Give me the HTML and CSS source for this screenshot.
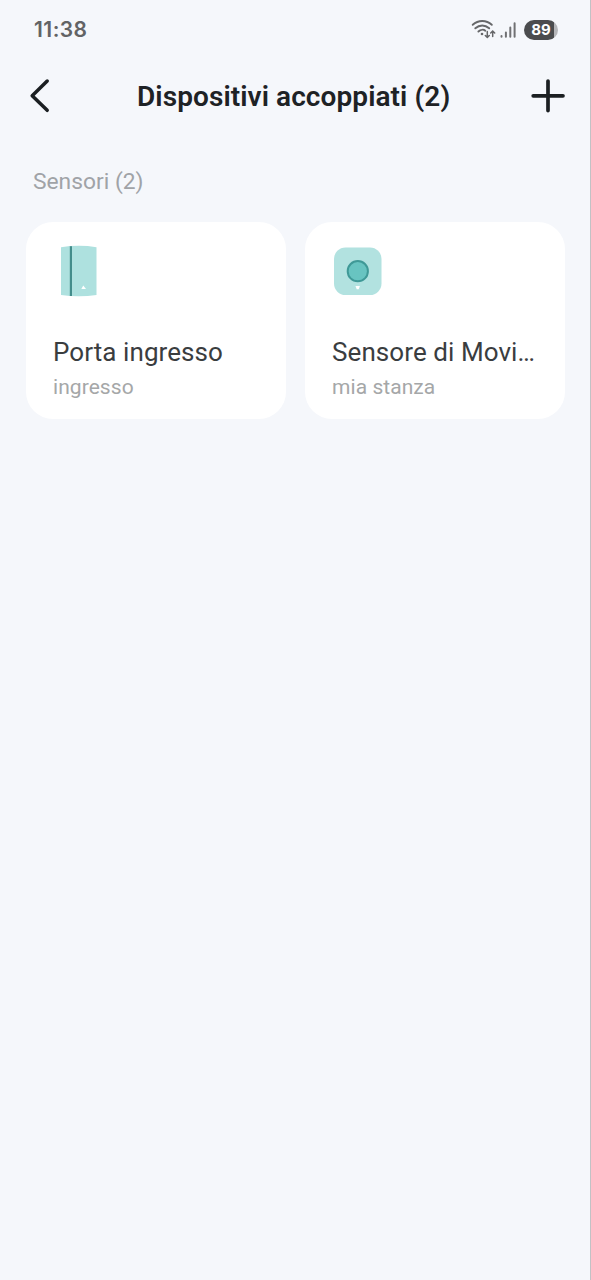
FILE: index.html
```html
<!DOCTYPE html>
<html lang="it">
<head>
<meta charset="utf-8">
<title>Dispositivi accoppiati</title>
<link rel="stylesheet" href="styles.css">
</head>
<body>
<div class="screen">
  <div class="status">
    <span class="clock">11:38</span>
    <div class="indicators">
      <svg class="wifi" width="25" height="22" viewBox="0 0 25 22" fill="none" stroke="#666769" stroke-width="1.9" stroke-linecap="round">
        <path d="M1.700 5.800C7.300 .8 15.300 .8 20.800 5.800M4.300 9.300C8.500 5.500 14 5.500 18.200 9.300M7.400 12.500C9.700 10.400 12.700 10.400 14.300 11.700"/>
        <circle cx="11" cy="15" r="1.300" fill="#666769" stroke="none"/>
        <path stroke-width="1.500" d="M16.300 12.500v6m-2-2 2 2 2-2M21.700 17.500V12m-2 2 2-2 2 2"/>
      </svg>
      <svg class="signal" width="16" height="18" viewBox="0 0 16 18" fill="none" stroke="#707173" stroke-width="2" stroke-linecap="round">
        <path d="M1.500 15v.8M5.900 11.500V15.800M10.300 6.500V15.800M14.600 2.200V15.800"/>
      </svg>
      <span class="battery"><span class="level">89</span></span>
    </div>
  </div>
  <header class="header">
    <svg width="22" height="36" viewBox="0 0 22 36" fill="none" stroke="#1b1f22" stroke-width="3.500" stroke-linecap="round" stroke-linejoin="round">
      <path d="M19.200 3 4.200 17.700 19.200 32.300"/>
    </svg>
    <h1 class="title">Dispositivi accoppiati (2)</h1>
    <svg width="36" height="36" viewBox="0 0 36 36" fill="none" stroke="#1b1f22" stroke-width="3.700" stroke-linecap="round">
      <path d="M3.200 17.800H33M18 3V32.600"/>
    </svg>
  </header>
  <h2 class="section">Sensori (2)</h2>
  <main class="grid">
    <article class="card">
      <svg class="device" width="52" height="52" viewBox="0 0 52 52">
        <path fill="#aee1df" d="M8 2.200Q26-.6 43.500 2.200V50Q26 52.400 8 50Z"/>
        <path fill="#438d8b" d="M16.800 1.200H19V51H16.800Z"/>
        <path fill="#fff" d="M30.300 40.500 33 44H28.300Z"/>
      </svg>
      <div class="name">Porta ingresso</div>
      <div class="room">ingresso</div>
    </article>
    <article class="card">
      <svg class="device" width="52" height="52" viewBox="0 0 52 52">
        <rect x="2" y="2.500" width="47.500" height="47.500" rx="11.500" fill="#b2e2e0"/>
        <circle cx="25.800" cy="26.200" r="10.100" fill="#68c4c1" stroke="#3f9997" stroke-width="2"/>
        <path fill="#fff" d="M23.500 41h4.400L26.700 44.300h-2Z"/>
      </svg>
      <div class="name">Sensore di Movi…</div>
      <div class="room">mia stanza</div>
    </article>
  </main>
</div>
</body>
</html>
```
FILE: styles.css
```css
* { box-sizing: border-box; }
body { margin: 0; font-family: Roboto, "Liberation Sans", sans-serif; }
.screen {
  height: 1280px;
  background: #f5f7fb;
  border-right: 1px solid #c1c2c5;
  overflow: hidden;
}
.status {
  height: 59px;
  padding: 0 32px 0 34px;
  display: flex;
  align-items: center;
  justify-content: space-between;
}
.clock {
  font-family: Inter, Roboto, sans-serif;
  font-size: 21px;
  font-weight: 600;
  letter-spacing: 0.45px;
  color: #626365;
}
.indicators { display: flex; align-items: center; }
.wifi { margin-right: 4px; }
.signal { margin-right: 8px; }
.battery {
  width: 34px;
  height: 20px;
  border-radius: 10px;
  background: linear-gradient(90deg, #4b4c4e 0 30.5px, #b5b6b9 30.5px);
}
.level {
  display: block;
  text-align: center;
  font: 700 15px/20px Inter, Roboto, sans-serif;
  color: #fff;
}
.header {
  height: 73px;
  padding: 0 24px 0 28px;
  display: flex;
  align-items: center;
}
.title {
  flex: 1;
  margin: 3px 0 0 87px;
  font-size: 28px;
  line-height: 34px;
  font-weight: 600;
  letter-spacing: 0.08px;
  color: #1e2225;
  white-space: nowrap;
}
.section {
  margin: 36px 0 0 33px;
  font-size: 22.8px;
  line-height: 28px;
  font-weight: 400;
  color: #a0a3a7;
}
.grid {
  margin: 26px 25px 0 26px;
  display: grid;
  grid-template-columns: 1fr 1fr;
  gap: 19px;
}
.card {
  height: 197px;
  min-width: 0;
  padding: 23px 27px;
  border-radius: 27px;
  background: #fff;
}
.device { display: block; }
.name {
  margin-top: 39px;
  font-size: 26px;
  line-height: 32px;
  letter-spacing: 0.08px;
  color: #3a3d3f;
  white-space: nowrap;
}
.room {
  margin-top: 6px;
  font-size: 21px;
  line-height: 26px;
  letter-spacing: 0.06px;
  color: #a5a7a8;
}
```
